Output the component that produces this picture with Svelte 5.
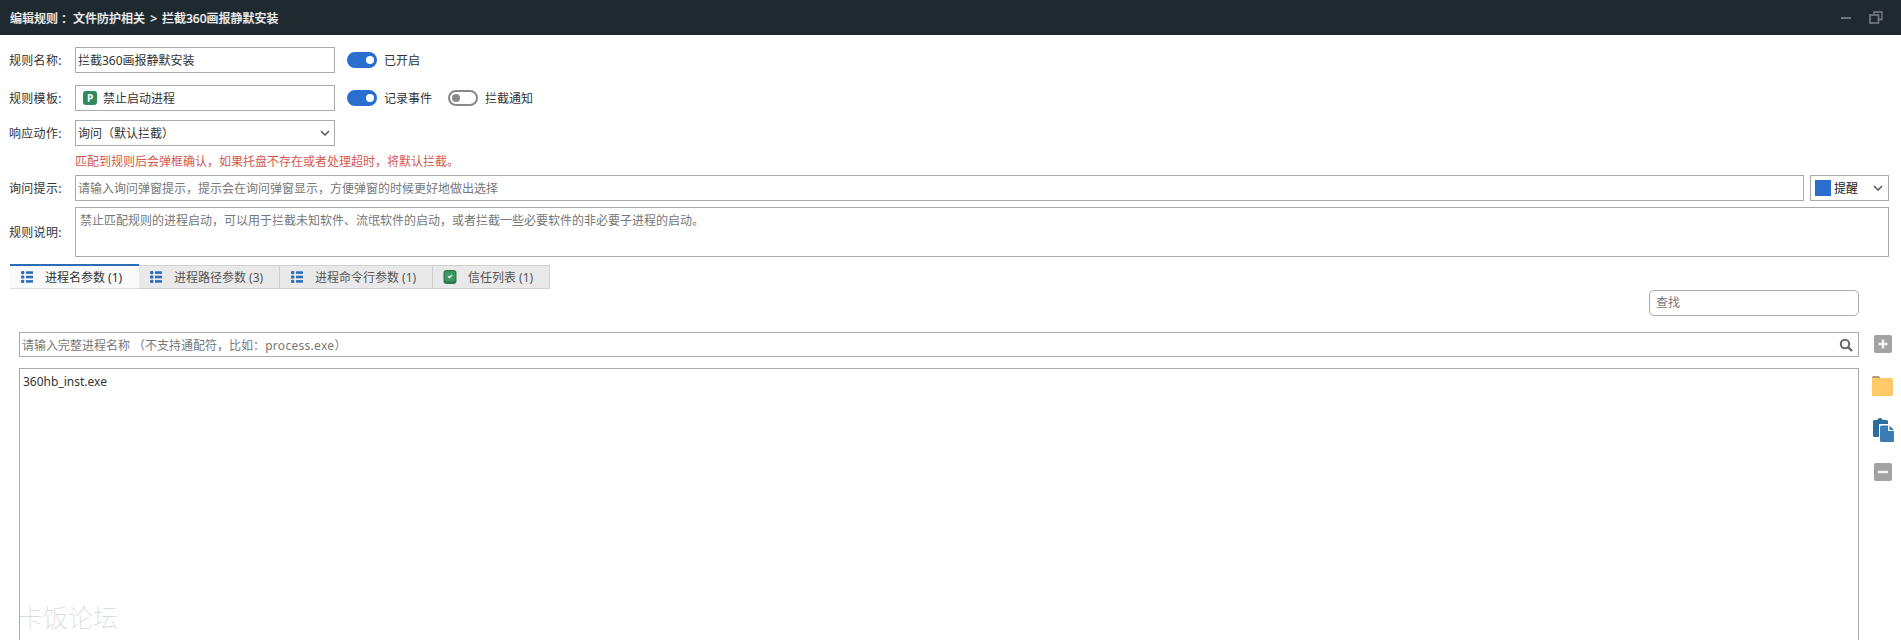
<script>
  const tabs = [
    { label: '进程名参数 (1)', icon: 'list', width: 129 },
    { label: '进程路径参数 (3)', icon: 'list', width: 141 },
    { label: '进程命令行参数 (1)', icon: 'list', width: 153 },
    { label: '信任列表 (1)', icon: 'trust', width: 117 }
  ]

  let activeTab = $state(0)
  let enabled = $state(true)
  let logEvent = $state(true)
  let notify = $state(false)
</script>

{#snippet chevron()}
  <svg class="chevron" width="10" height="6" viewBox="0 0 10 6">
    <path d="M1 1l4 4 4-4" fill="none" stroke="#555" stroke-width="1.5" />
  </svg>
{/snippet}

{#snippet toggle(on, flip)}
  <button class="toggle" class:on onclick={flip} aria-label="toggle">
    <span class="knob"></span>
  </button>
{/snippet}

<div class="page">
  <header class="titlebar">
    <span class="title">编辑规则 ：文件防护相关<span class="sep">&gt;</span>拦截360画报静默安装</span>
    <div class="win-btns">
      <svg width="10" height="2" viewBox="0 0 10 2"><rect width="10" height="2" fill="#6f7478" /></svg>
      <svg width="14" height="13" viewBox="0 0 14 13">
        <path d="M5 3.5V1h8v7.5h-3" fill="none" stroke="#7c8084" stroke-width="1.3" />
        <rect x="1" y="4" width="8.5" height="8" fill="none" stroke="#7c8084" stroke-width="1.5" />
      </svg>
    </div>
  </header>

  <div class="form">
    <div class="row r1">
      <span class="label">规则名称:</span>
      <div class="field short">拦截360画报静默安装</div>
      {@render toggle(enabled, () => (enabled = !enabled))}
      <span class="opt">已开启</span>
    </div>

    <div class="row r2">
      <span class="label">规则模板:</span>
      <div class="field short">
        <span class="badge">P</span>
        <span>禁止启动进程</span>
      </div>
      {@render toggle(logEvent, () => (logEvent = !logEvent))}
      <span class="opt">记录事件</span>
      <span class="second">{@render toggle(notify, () => (notify = !notify))}</span>
      <span class="opt">拦截通知</span>
    </div>

    <div class="row r3">
      <span class="label">响应动作:</span>
      <div class="field short select">
        <span>询问（默认拦截）</span>
        {@render chevron()}
      </div>
    </div>

    <p class="warn">匹配到规则后会弹框确认，如果托盘不存在或者处理超时，将默认拦截。</p>

    <div class="row">
      <span class="label">询问提示:</span>
      <div class="field grow muted">请输入询问弹窗提示，提示会在询问弹窗显示，方便弹窗的时候更好地做出选择</div>
      <div class="field level">
        <span class="swatch"></span>
        <span class="level-text">提醒</span>
        {@render chevron()}
      </div>
    </div>

    <div class="row r5">
      <span class="label">规则说明:</span>
      <div class="field grow desc muted">禁止匹配规则的进程启动，可以用于拦截未知软件、流氓软件的启动，或者拦截一些必要软件的非必要子进程的启动。</div>
    </div>
  </div>

  <div class="tabs">
    {#each tabs as tab, i}
      <button class="tab" class:active={activeTab === i} class:trust={tab.icon === 'trust'} style="width: {tab.width}px" onclick={() => (activeTab = i)}>
        {#if tab.icon === 'list'}
          <svg width="12" height="12" viewBox="0 0 12 12" fill="#2a6fb8">
            <rect x="0" y="0" width="3.4" height="3.2" rx="1.2" />
            <rect x="0" y="4.4" width="3.4" height="3.2" rx="1.2" />
            <rect x="0" y="8.8" width="3.4" height="3.2" rx="1.2" />
            <rect x="5" y="0.3" width="7" height="2.6" />
            <rect x="5" y="4.7" width="7" height="2.6" />
            <rect x="5" y="9.1" width="7" height="2.6" />
          </svg>
        {:else}
          <svg width="14" height="14" viewBox="0 0 14 14">
            <rect x="0.5" y="0" width="13" height="14" rx="3" fill="#2f7d4f" />
            <rect x="2" y="1.5" width="10" height="9.5" rx="1.5" fill="#3c9a63" />
            <path d="M5 6.2l1.5 1.5L9 5" fill="none" stroke="#fff" stroke-width="1.2" />
          </svg>
        {/if}
        <span>{tab.label}</span>
      </button>
    {/each}
  </div>

  <div class="search-row">
    <div class="search">查找</div>
  </div>

  <div class="panel">
    <div class="list-col">
      <div class="field filter muted">
        <span>请输入完整进程名称 （不支持通配符，比如：<span class="latin">process.exe</span>）</span>
        <svg width="14" height="14" viewBox="0 0 14 14" fill="none" stroke="#666">
          <circle cx="6" cy="6" r="4.2" stroke-width="2" />
          <path d="M9 9l4 4" stroke-width="2.4" />
        </svg>
      </div>
      <div class="list">360hb_inst.exe</div>
    </div>

    <div class="side">
      <svg width="24" height="24" viewBox="0 0 24 24">
        <rect x="3" y="3" width="18" height="18" rx="2" fill="#a3a3a3" />
        <path d="M12 7.5v9M7.5 12h9" stroke="#f4f4f4" stroke-width="2.4" />
      </svg>
      <svg width="24" height="24" viewBox="0 0 24 24">
        <path d="M1 3q0-2 1-2h6l2 2.5H1z" fill="#b5a16f" />
        <rect x="1" y="3" width="21" height="18" rx="1.5" fill="#fdc969" />
      </svg>
      <svg width="24" height="24" viewBox="0 0 24 24">
        <path d="M2 3.5q0-1.5 1.5-1.500H6.500V1.500q0-1.500 2.500-1.500t2.500 1.500V2h4Q17 2 17 3.500V19H3.500Q2 19 2 17.500z" fill="#2c6c9f" />
        <path d="M9 6h9l6 6v12H9q-1 0-1-1V7q0-1 1-1z" fill="#fff" />
        <path d="M10.500 7.500H17v5.500h6v9.500q0 1.500-1.500 1.500h-11Q9 24 9 22.500V9q0-1.500 1.500-1.500z" fill="#3a7cb5" />
        <path d="M18.500 7.500l4.500 4.500h-4.500z" fill="#3a7cb5" />
      </svg>
      <svg width="24" height="24" viewBox="0 0 24 24">
        <rect x="3" y="2" width="18" height="18" rx="2" fill="#a3a3a3" />
        <path d="M7 11h10" stroke="#f4f4f4" stroke-width="2.4" />
      </svg>
    </div>
  </div>

  <div class="watermark">卡饭论坛</div>
</div>

<style>
  :global(body) {
    margin: 0;
    background: #fff;
  }

  .page {
    position: relative;
    height: 640px;
    overflow: hidden;
    font-family: "Noto Sans", "Noto Sans CJK SC", sans-serif;
    font-size: 12px;
    color: #333;
    background: #fff;
  }

  .titlebar {
    height: 35px;
    background: #1f2a30;
    display: flex;
    align-items: center;
    justify-content: space-between;
    padding: 0 18px 0 10px;
    box-sizing: border-box;
  }

  .title {
    color: #f0f0f0;
    font-weight: 500;
    -webkit-text-stroke: 0.2px #f0f0f0;
  }

  .sep {
    margin: 0 5px;
  }

  .win-btns {
    display: flex;
    align-items: center;
    gap: 18px;
  }

  .form {
    padding: 12px 12px 0 9px;
  }

  .row {
    display: flex;
    align-items: center;
    height: 26px;
  }

  .r2 {
    margin-top: 12px;
  }

  .r3 {
    margin-top: 9px;
  }

  .r5 {
    margin-top: 6px;
    height: 50px;
  }

  .label {
    width: 66px;
    flex-shrink: 0;
    white-space: nowrap;
    letter-spacing: 0.3px;
  }

  .field {
    box-sizing: border-box;
    height: 26px;
    border: 1px solid #aaa;
    display: flex;
    align-items: center;
    padding: 0 2px;
    background: #fff;
    white-space: nowrap;
  }

  .short {
    width: 260px;
    flex-shrink: 0;
  }

  .grow {
    flex: 1;
  }

  .muted {
    color: #777;
  }

  .select {
    justify-content: space-between;
    padding-right: 4px;
  }

  .chevron {
    flex-shrink: 0;
  }

  .badge {
    width: 14px;
    height: 14px;
    margin: 0 6px 0 5px;
    border-radius: 3px;
    background: #2e8b5f;
    color: #fff;
    font-size: 10px;
    font-weight: 700;
    line-height: 14px;
    text-align: center;
  }

  .toggle {
    position: relative;
    width: 30px;
    height: 16px;
    margin-left: 12px;
    padding: 0;
    border: 2.5px solid #888;
    border-radius: 8px;
    background: #fff;
    box-sizing: border-box;
    cursor: pointer;
  }

  .toggle .knob {
    position: absolute;
    left: 1.5px;
    top: 1.5px;
    width: 8px;
    height: 8px;
    border-radius: 50%;
    background: #888;
  }

  .toggle.on {
    border-color: #2a6fd0;
    background: #2a6fd0;
  }

  .toggle.on .knob {
    left: auto;
    right: 1.5px;
    background: #fff;
  }

  .opt {
    margin-left: 7px;
    white-space: nowrap;
  }

  .second {
    display: flex;
    margin-left: 4px;
  }

  .warn {
    margin: 0;
    height: 29px;
    padding-left: 66px;
    line-height: 31px;
    color: #d4594c;
  }

  .level {
    width: 79px;
    margin-left: 6px;
    padding: 0 5px 0 4px;
    color: #222;
  }

  .swatch {
    width: 16px;
    height: 16px;
    background: #2a6fd0;
    margin-right: 3px;
  }

  .level-text {
    flex: 1;
  }

  .desc {
    height: 50px;
    align-items: flex-start;
    padding: 3px 4px;
  }

  .tabs {
    display: flex;
    height: 25px;
    margin: 7px 0 0 10px;
  }

  .tab {
    box-sizing: border-box;
    height: 24px;
    margin-top: 1px;
    display: flex;
    align-items: center;
    gap: 12px;
    padding: 0 0 0 11px;
    border: 1px solid #d0d0d0;
    border-left: 0;
    background: #e9e9e9;
    color: #555;
    font: inherit;
    cursor: pointer;
  }

  .tab.trust {
    padding-left: 10px;
    gap: 11px;
  }

  .tab.active {
    height: 25px;
    margin-top: 0;
    border: 0;
    border-top: 2px solid #2a6cb5;
    border-bottom: 1px solid #ddd;
    background: #fafafa;
    color: #333;
  }

  .search-row {
    display: flex;
    justify-content: flex-end;
    margin: 1px 42px 0 0;
  }

  .search {
    box-sizing: border-box;
    width: 210px;
    height: 26px;
    padding: 0 6px;
    line-height: 24px;
    border: 1px solid #aaa;
    border-radius: 5px;
    color: #777;
  }

  .panel {
    display: flex;
    margin: 16px 0 0 19px;
  }

  .list-col {
    width: 1840px;
    flex-shrink: 0;
  }

  .filter {
    height: 25px;
    justify-content: space-between;
    padding-right: 5px;
  }

  .latin {
    letter-spacing: 0.3px;
  }

  .list {
    box-sizing: border-box;
    height: 300px;
    margin-top: 11px;
    padding: 4px 3px;
    border: 1px solid #aaa;
    color: #333;
  }

  .side {
    display: flex;
    flex-direction: column;
    gap: 19px;
    margin-left: 12px;
  }

  .watermark {
    position: absolute;
    left: 18px;
    top: 598px;
    font-family: "Noto Sans CJK SC", sans-serif;
    font-size: 25px;
    font-weight: 100;
    color: #d6d6d6;
  }
</style>
